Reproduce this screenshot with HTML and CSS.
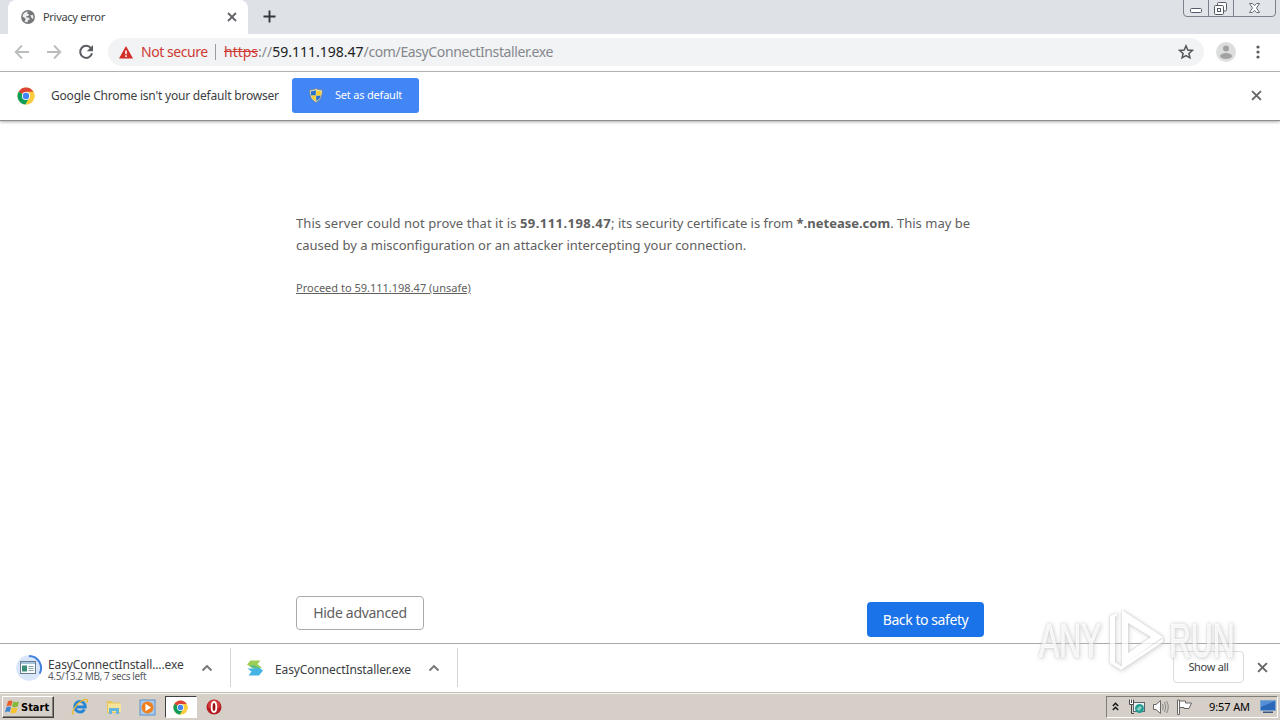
FILE: index.html
```html
<!DOCTYPE html>
<html lang="en">
<head>
    <meta charset="UTF-8">
    <meta name="viewport" content="width=device-width, initial-scale=1.0">
    <title>Privacy error</title>
    <link rel="stylesheet" href="styles.css">
</head>
<body>
    <!-- shared icons -->
    <svg width="0" height="0" class="defs">
        <symbol id="chrome" viewBox="0 0 18 18">
            <circle cx="9" cy="9" r="8.5" fill="#f9cf3c"/>
            <path d="M9 9 L1.6 4.8 A8.5 8.5 0 0 1 16.4 4.8 Z" fill="#dc4437"/>
            <path d="M9 9 L1.6 4.8 A8.5 8.5 0 0 0 8.4 17.5 L12.4 10.8 Z" fill="#109d58"/>
            <path d="M9 4.8 H16.4 A8.5 8.5 0 0 1 8.4 17.5 L12.6 11 Z" fill="#fbcc3d"/>
            <circle cx="9" cy="9" r="4.1" fill="#fff"/>
            <circle cx="9" cy="9" r="3.2" fill="#4285f4"/>
        </symbol>
        <symbol id="close" viewBox="0 0 10 10">
            <path d="M1 1 L9 9 M9 1 L1 9" fill="none" stroke="currentColor" stroke-width="1.8"/>
        </symbol>
        <symbol id="chevron" viewBox="0 0 12 8">
            <path d="M1.5 6.5 L6 2 L10.5 6.5" fill="none" stroke="#757575" stroke-width="1.9"/>
        </symbol>
    </svg>

    <div class="tab-strip">
        <div class="tab">
            <svg width="14" height="14" viewBox="0 0 14 14">
                <circle cx="7" cy="7" r="6.9" fill="#75787b"/>
                <path d="M7.6 1.5 Q5.6 2.4 6.2 3.6 L8 4.2 L7.4 6 L5.2 6.2 L5.3 7.6 L8.2 7.8 L8.6 9.4 L6.9 10.3 L6.6 12.2 Q4.9 12.4 3.4 11.2 L4.8 9.6 L3.8 8 L1.5 6.6 Q1.8 3.2 4.6 1.9 Z" fill="#eef0f1"/>
                <path d="M9.3 5.3 L11.9 5 Q12.8 6.8 12 9 L10.6 8 Z" fill="#eef0f1"/>
            </svg>
            <span class="tab-title">Privacy error</span>
            <svg class="tab-close" width="10" height="10"><use href="#close"/></svg>
        </div>
        <svg class="new-tab" width="13" height="13" viewBox="0 0 13 13">
            <path d="M6.5 0.5 V12.5 M0.5 6.5 H12.5" stroke="#34373b" stroke-width="1.9"/>
        </svg>
        <svg class="window-controls" width="93" height="17" viewBox="0 0 93 17">
            <path d="M0.5 0 V13 Q0.5 16.5 4 16.5 H89 Q92.5 16.5 92.5 13 V0 Z" fill="#e1e4e9"/>
            <path d="M0.5 0 V13 Q0.5 16.5 4 16.5 H89 Q92.5 16.5 92.5 13 V0 M25.5 0 V16 M50.5 0 V16" fill="none" stroke="#7b818c"/>
            <rect x="7.5" y="8.5" width="11" height="4" rx="1.2" fill="#fff" stroke="#555b66"/>
            <rect x="34.5" y="2.5" width="9" height="8.5" rx="1.2" fill="#fff" stroke="#555b66"/>
            <rect x="31.5" y="5.5" width="9" height="9" rx="1.2" fill="#fff" stroke="#555b66"/>
            <rect x="34.5" y="8.5" width="3" height="3" fill="#fff" stroke="#555b66"/>
            <path d="M66.5 3.5 H69.5 L71.5 5.7 L73.5 3.5 H76.5 L73.5 8 L76.5 12.5 H73.5 L71.5 10.3 L69.5 12.5 H66.5 L69.5 8 Z" fill="#fff" stroke="#666c77"/>
        </svg>
    </div>

    <div class="toolbar">
        <svg class="nav-icon" width="16" height="16" viewBox="0 0 16 16">
            <path d="M15 8 H2 M8 1.5 L1.7 8 L8 14.5" fill="none" stroke="#babcbe" stroke-width="1.8"/>
        </svg>
        <svg class="nav-icon" width="16" height="16" viewBox="0 0 16 16">
            <path d="M1 8 H14 M8 1.5 L14.3 8 L8 14.5" fill="none" stroke="#babcbe" stroke-width="1.8"/>
        </svg>
        <svg class="nav-icon" width="16" height="16" viewBox="0 0 16 16">
            <path d="M13 4.3 A6 6 0 1 0 14 9.3" fill="none" stroke="#5a5d61" stroke-width="2"/>
            <path d="M15 1 V7.2 H8.8 Z" fill="#5a5d61"/>
        </svg>
        <div class="omnibox">
            <svg width="14" height="13" viewBox="0 0 14 13">
                <path d="M7 0 L14 12.5 H0 Z" fill="#d22f27"/>
                <path d="M7 4.5 V8.3 M7 9.3 V11" stroke="#fff" stroke-width="1.6"/>
            </svg>
            <span class="not-secure">Not secure</span>
            <span class="separator"></span>
            <span class="url"><s>https</s><span class="slashes">://</span><b>59.111.198.47</b><span class="path">/com/EasyConnectInstaller.exe</span></span>
            <svg class="star" width="16" height="16" viewBox="0 0 16 16">
                <path d="M8 1.8 L9.8 6 L14.3 6.4 L10.9 9.4 L11.9 13.8 L8 11.5 L4.1 13.8 L5.1 9.4 L1.7 6.4 L6.2 6 Z" fill="none" stroke="#54575b" stroke-width="1.5"/>
            </svg>
        </div>
        <svg class="avatar" width="20" height="20" viewBox="0 0 20 20">
            <circle cx="10" cy="10" r="10" fill="#dcdddd"/>
            <circle cx="10" cy="6.5" r="3" fill="#a2a2a2"/>
            <ellipse cx="10" cy="14" rx="6" ry="3" fill="#a2a2a2"/>
        </svg>
        <svg class="menu" width="4" height="14" viewBox="0 0 4 14">
            <g fill="#595c60"><circle cx="2" cy="2" r="1.6"/><circle cx="2" cy="7" r="1.6"/><circle cx="2" cy="12" r="1.6"/></g>
        </svg>
    </div>

    <div class="infobar">
        <svg width="18" height="18"><use href="#chrome"/></svg>
        <span class="infobar-text">Google Chrome isn't your default browser</span>
        <div class="default-button">
            <svg width="14" height="15" viewBox="0 0 14 15">
                <path d="M7 0.5 Q9.5 2 13.3 2 Q13.8 11 7 14.5 Q0.2 11 0.7 2 Q4.5 2 7 0.5 Z" fill="#e8e4cb" stroke="#777e84" stroke-width="0.8"/>
                <path d="M6.8 2 V7.5 H2.2 Q1.8 5 2 3.3 Q5 3.2 6.8 2 Z M7.2 7.5 H11.8 Q11 11 7.2 13 Z" fill="#2770cb"/>
                <path d="M7.2 2 Q9 3.2 12 3.3 Q12.2 5 11.8 7.5 H7.2 Z M2.2 7.5 H6.8 V13 Q3 11 2.2 7.5 Z" fill="#f5cc31"/>
            </svg>
            <span>Set as default</span>
        </div>
        <svg class="infobar-close" width="11" height="11"><use href="#close"/></svg>
    </div>

    <div class="page">
        <p class="message"><span class="intro">This server could not prove that it is </span><b>59.111.198.47</b>; its security certificate is from <b class="domain">*.netease.com</b>. This may be<br><span class="second-line">caused by a misconfiguration or an attacker intercepting your connection.</span></p>
        <a class="proceed">Proceed to 59.111.198.47 (unsafe)</a>
        <div class="buttons">
            <div class="hide-button"><span>Hide advanced</span></div>
            <div class="safety-button"><span>Back to safety</span></div>
        </div>
    </div>

    <div class="shelf">
        <div class="download">
            <svg width="28" height="28" viewBox="0 0 28 28">
                <circle cx="14" cy="14" r="12.8" fill="#d9e5f8"/>
                <path d="M14 2 A12 12 0 0 1 24.6 19.6" fill="none" stroke="#4181e0" stroke-width="2"/>
                <rect x="5.5" y="7.5" width="15" height="12" fill="#f7fbfc" stroke="#697d8d"/>
                <rect x="6" y="8" width="14" height="2" fill="#a7c4db"/>
                <rect x="7" y="11.5" width="5" height="6" fill="#3b8c76"/>
                <path d="M13.5 12.5 H18.5 M13.5 14.5 H18.5 M13.5 16.5 H18.5" stroke="#8ca4aa"/>
            </svg>
            <div class="download-info">
                <span class="file-name">EasyConnectInstall....exe</span>
                <span class="progress">4.5/13.2 MB, 7 secs left</span>
            </div>
            <svg class="chevron" width="12" height="8"><use href="#chevron"/></svg>
        </div>
        <div class="download finished">
            <svg width="18" height="16" viewBox="0 0 18 16">
                <path d="M4.5 0.5 H14.5 L11.5 4 L16 8 H6 L1 4.5 Z" fill="#9ccd54"/>
                <path d="M6 5.5 L13 7.5 L17 10.5 L13 15.5 H2.5 L5.5 11.5 L1.5 8.5 H9 Z" fill="#43b4e4"/>
                <path d="M4 5.5 L8 5 L13.5 8.5 H7 Z" fill="#5bbd8d"/>
            </svg>
            <span class="file-name file-full">EasyConnectInstaller.exe</span>
            <svg class="chevron" width="12" height="8"><use href="#chevron"/></svg>
        </div>
        <div class="show-all"><span>Show all</span></div>
        <svg class="shelf-close" width="11" height="11"><use href="#close"/></svg>
    </div>

    <div class="taskbar">
        <div class="start">
            <svg width="17" height="16" viewBox="0 0 16 16">
                <path d="M3.5 2.3 Q5.5 0.8 8 2 L6.7 7 Q4.5 6 2 7.5 Z" fill="#e95d29"/>
                <path d="M8.8 2.4 Q11.5 4 14.5 2.5 L13.2 7.6 Q10 9 7.5 7.4 Z" fill="#85b83c"/>
                <path d="M1.8 8.5 Q4 7 6.5 8 L5.2 13 Q3 12 0.5 13.5 Z" fill="#3f86d2"/>
                <path d="M7.2 8.5 Q10 10 13 8.6 L11.7 13.6 Q8.5 15.2 6 13.5 Z" fill="#f7c42f"/>
            </svg>
            <span>Start</span>
        </div>
        <div class="launch">
            <svg width="18" height="18" viewBox="0 0 18 18">
                <path d="M13.5 11.5 A5.3 5.3 0 1 1 14.3 9 H5" fill="none" stroke="#2484d5" stroke-width="2.8"/>
                <path d="M3 16 Q0 16 3 11 Q7 4 13.5 1.7 Q18 0.5 15.5 5" fill="none" stroke="#e8b92e" stroke-width="1.4"/>
            </svg>
        </div>
        <div class="launch">
            <svg width="16" height="16" viewBox="0 0 16 16">
                <path d="M1 2 H6 L7 3.5 H14 V14 H1 Z" fill="#e8c65b"/>
                <path d="M2 4.5 H15 V13 H2 Z" fill="#f7e49b"/>
                <path d="M3 15 V9 H13 V15 H10 V12 H6 V15 Z" fill="#67b4df"/>
            </svg>
        </div>
        <div class="launch">
            <svg width="17" height="17" viewBox="0 0 17 17">
                <rect x="1" y="1" width="15" height="15" fill="#a9cbed" stroke="#5e91c8"/>
                <circle cx="8.5" cy="8.5" r="6" fill="#ee8020"/>
                <path d="M6.5 4.8 L12 8.5 L6.5 12.2 Z" fill="#fff"/>
            </svg>
        </div>
        <div class="launch active"><svg width="15" height="15"><use href="#chrome"/></svg></div>
        <div class="launch">
            <svg width="16" height="16" viewBox="0 0 16 16">
                <circle cx="8" cy="8" r="7.5" fill="#b51b20"/>
                <ellipse cx="8" cy="6" rx="6" ry="5" fill="#d63b3b"/>
                <ellipse cx="8" cy="8" rx="2.3" ry="5" fill="#9e1015" stroke="#fff" stroke-width="1.8"/>
            </svg>
        </div>
        <div class="tray">
            <svg class="expand" width="7" height="9" viewBox="0 0 7 9">
                <path d="M0.8 4 L3.5 1.3 L6.2 4 M0.8 8 L3.5 5.3 L6.2 8" fill="none" stroke="#111" stroke-width="1.4"/>
            </svg>
            <svg class="network" width="16" height="16" viewBox="0 0 16 16">
                <rect x="4.5" y="3.5" width="11" height="9" fill="#eef4f4" stroke="#58676e"/>
                <circle cx="10.5" cy="9.5" r="4.5" fill="#269b91"/>
                <path d="M7.5 10 L11 7 L13 8.5 L10 12 Z" fill="#8dd3c8"/>
                <path d="M0.5 0.5 H5 V5.5 H0.5 Z" fill="#fff"/>
                <path d="M0.5 0.5 V5.5 H2.5 V14.5 H5 M2.5 0.5 V4 M4.5 0.5 V5.5 H2.5" fill="none" stroke="#444"/>
            </svg>
            <svg class="speaker" width="17" height="16" viewBox="0 0 17 16">
                <path d="M1.5 5.5 H4 L8.5 1.5 V14.5 L4 10.5 H1.5 Z" fill="#fafafa" stroke="#666"/>
                <path d="M10.5 5 Q12 8 10.5 11 M12.5 3 Q15 8 12.5 13 M14.5 2 Q18 8 14.5 14" fill="none" stroke="#858585"/>
            </svg>
            <svg class="flag" width="17" height="16" viewBox="0 0 17 16">
                <path d="M1.5 1 V15.5 H3.5 V1 Z" fill="#fff" stroke="#666"/>
                <path d="M3.5 2 H9.5 V4 H15.5 L13 9.5 H8 V8.5 H3.5 Z" fill="#fff" stroke="#666"/>
            </svg>
            <span class="clock">9:57 AM</span>
            <svg class="desktop" width="16" height="14" viewBox="0 0 16 14">
                <rect x="0.5" y="0.5" width="15" height="10" fill="#2b68b8" stroke="#79a4cf"/>
                <path d="M1 1 H15 L1 7 Z" fill="#5590d5"/>
                <rect x="3" y="11.5" width="10" height="1.5" fill="#38577f"/>
            </svg>
        </div>
    </div>

    <div class="watermark">
        <span>ANY</span>
        <svg width="64" height="68" viewBox="0 0 64 68">
            <path d="M17 3 L58 30 L17 59 Z M23 16 V46 L46 30 Z" fill="#fff" fill-rule="evenodd"/>
            <path d="M12 6 L5 9 V56 L16 63 L58 35 L58 31 L16 59 L10 55 V10 L12 9 Z" fill="#fff"/>
        </svg>
        <span>RUN</span>
    </div>
</body>
</html>
```
FILE: styles.css
```css
* {
    box-sizing: border-box;
}

body {
    margin: 0;
    width: 1280px;
    height: 720px;
    overflow: hidden;
    display: flex;
    flex-direction: column;
    position: relative;
    background: #fff;
    color: #3c3e42;
    font-family: "Noto Sans", sans-serif;
    font-size: 12px;
}

svg {
    display: block;
    flex-shrink: 0;
}

span, .proceed {
    white-space: nowrap;
}

.defs {
    position: absolute;
}

.tab-strip {
    height: 34px;
    display: flex;
    background: #dee1e6;
    padding-left: 8px;
}

.tab {
    width: 240px;
    display: flex;
    align-items: center;
    padding: 0 11px 0 13px;
    background: #fff;
    border-radius: 8px 8px 0 0;
}

.tab-title {
    margin-left: 8px;
    padding-bottom: 2px;
    font-size: 11px;
    letter-spacing: -0.3px;
}

.tab-close {
    margin-left: auto;
    color: #5f6368;
}

.new-tab {
    margin: 10px 0 0 15px;
}

.window-controls {
    margin-left: auto;
    margin-right: 4px;
}

.toolbar {
    height: 38px;
    display: flex;
    align-items: center;
    padding: 0 20px 1px 14px;
    border-bottom: 1px solid #b3b3b3;
}

.nav-icon {
    margin-right: 16px;
}

.omnibox {
    flex: 1;
    height: 28px;
    display: flex;
    align-items: center;
    margin-left: -2px;
    padding: 0 10px 0 11px;
    border-radius: 14px;
    background: #f1f3f4;
    font-size: 14px;
}

.not-secure {
    width: 67px;
    margin-left: 8px;
    padding-bottom: 2px;
    color: #cf3a35;
    letter-spacing: -0.45px;
}

.separator {
    width: 1px;
    height: 16px;
    margin: 0 8px 0 7px;
    background: #999b9e;
}

.url {
    padding-bottom: 2px;
    color: #85888c;
}

.url s {
    color: #cf3a35;
}

.url b {
    color: #202124;
    font-weight: normal;
}

.path {
    letter-spacing: -0.38px;
}

.star {
    margin-left: auto;
}

.avatar {
    margin-left: 12px;
}

.menu {
    margin-left: 20px;
}

.infobar {
    height: 49px;
    display: flex;
    align-items: center;
    padding: 0 18px 1px 17px;
    border-bottom: 1px solid #8d8d8d;
    box-shadow: 0 1px 3px #aaa;
}

.infobar-text {
    width: 229px;
    margin: 0 12px 0 16px;
    letter-spacing: -0.2px;
}

.default-button {
    width: 127px;
    height: 35px;
    display: flex;
    align-items: center;
    padding-left: 17px;
    background: #4285f4;
    border-radius: 3px;
    color: #fff;
    font-size: 11px;
    letter-spacing: -0.2px;
}

.default-button span {
    margin-left: 12px;
    padding-bottom: 2px;
}

.infobar-close {
    margin-left: auto;
    color: #686868;
}

.page {
    flex: 1;
    display: flex;
    flex-direction: column;
    width: 688px;
    margin-left: 296px;
    padding-top: 91px;
    color: #606060;
}

.message {
    margin: 0;
    font-size: 13px;
    line-height: 22px;
    white-space: nowrap;
}

.intro {
    letter-spacing: 0.07px;
}

.message b {
    letter-spacing: 0.45px;
}

.message .domain {
    letter-spacing: 0;
}

.second-line {
    letter-spacing: -0.01px;
}

.proceed {
    align-self: flex-start;
    margin-top: 24px;
    font-size: 11px;
    line-height: 16px;
    text-decoration: underline;
}

.buttons {
    display: flex;
    justify-content: space-between;
    margin-top: auto;
    padding-bottom: 6px;
}

.hide-button,
.safety-button {
    height: 35px;
    display: flex;
    align-items: center;
    justify-content: center;
    border-radius: 4px;
    font-size: 14px;
}

.hide-button {
    width: 128px;
    height: 34px;
    padding-bottom: 2px;
    border: 1px solid #aaa;
    letter-spacing: -0.3px;
}

.safety-button {
    width: 117px;
    margin-top: 6px;
    background: #1a73e8;
    color: #fff;
    letter-spacing: -0.42px;
}

.shelf {
    height: 49px;
    display: flex;
    align-items: center;
    padding: 0 12px 1px 15px;
    border-top: 1px solid #a9a9a9;
}

.download {
    width: 216px;
    height: 39px;
    display: flex;
    align-items: center;
    border-right: 1px solid #d5d5d5;
}

.download-info {
    display: flex;
    flex-direction: column;
    width: 136px;
    margin-left: 5px;
    padding-top: 4px;
}

.file-name {
    font-size: 12px;
    line-height: 12px;
    letter-spacing: -0.12px;
}

.progress {
    color: #5a5c5f;
    font-size: 10px;
    line-height: 10px;
    letter-spacing: -0.38px;
}

.chevron {
    margin-left: 17px;
}

.finished {
    width: 227px;
    padding-left: 15px;
}

.file-full {
    width: 137px;
    margin-left: 11px;
    padding-top: 4px;
}

.finished .chevron {
    margin-left: 16px;
}

.show-all {
    width: 71px;
    height: 32px;
    display: flex;
    align-items: center;
    justify-content: center;
    margin: 0 0 2px auto;
    border: 1px solid #dadce0;
    border-radius: 4px;
    font-size: 11px;
    letter-spacing: -0.3px;
}

.shelf-close {
    margin-left: 13px;
    color: #686868;
}

.taskbar {
    height: 28px;
    display: flex;
    align-items: center;
    padding: 1px 2px 0 2px;
    background: #d5cfc8;
    border-top: 1px solid #c0bdb9;
    box-shadow: inset 0 1px 0 #f8f6f4;
    color: #000;
}

.start {
    width: 52px;
    height: 22px;
    display: flex;
    align-items: center;
    margin-right: 10px;
    padding-left: 1px;
    border: 1px solid;
    border-color: #fff #404040 #404040 #fff;
    box-shadow: inset -1px -1px 0 #858078;
    font: bold 11px "DejaVu Sans Condensed", sans-serif;
}

.launch {
    width: 32px;
    height: 22px;
    display: flex;
    align-items: center;
    justify-content: center;
    margin-right: 1.6px;
}

.active {
    background: #fff;
    border: 1px solid;
    border-color: #404040 #fff #fff #404040;
}

.tray {
    width: 172px;
    height: 22px;
    display: flex;
    align-items: center;
    margin-left: auto;
    padding-left: 5px;
    border: 1px solid;
    border-color: #827d76 #fff #fff #827d76;
    font-size: 11px;
}

.expand {
    margin-bottom: 2px;
}

.network {
    margin-left: 10px;
}

.speaker {
    margin-left: 7px;
}

.flag {
    margin-left: 7px;
}

.clock {
    width: 41px;
    margin-left: 16px;
    padding-bottom: 2px;
    letter-spacing: -0.1px;
}

.desktop {
    margin-left: 10px;
}

/* translucent logo over the bottom right corner */
.watermark {
    position: absolute;
    left: 1039px;
    top: 607px;
    display: flex;
    align-items: center;
    color: rgba(255, 255, 255, 0.8);
    font: 48px/68px "Liberation Sans", sans-serif;
    filter: drop-shadow(0 0 1px #bbb) drop-shadow(1px 1px 2px #ccc);
    opacity: 0.75;
    -webkit-text-stroke: 1px rgba(255, 255, 255, 0.8);
}

.watermark span {
    width: 66px;
    transform: scaleX(0.63);
    transform-origin: left;
}
```
